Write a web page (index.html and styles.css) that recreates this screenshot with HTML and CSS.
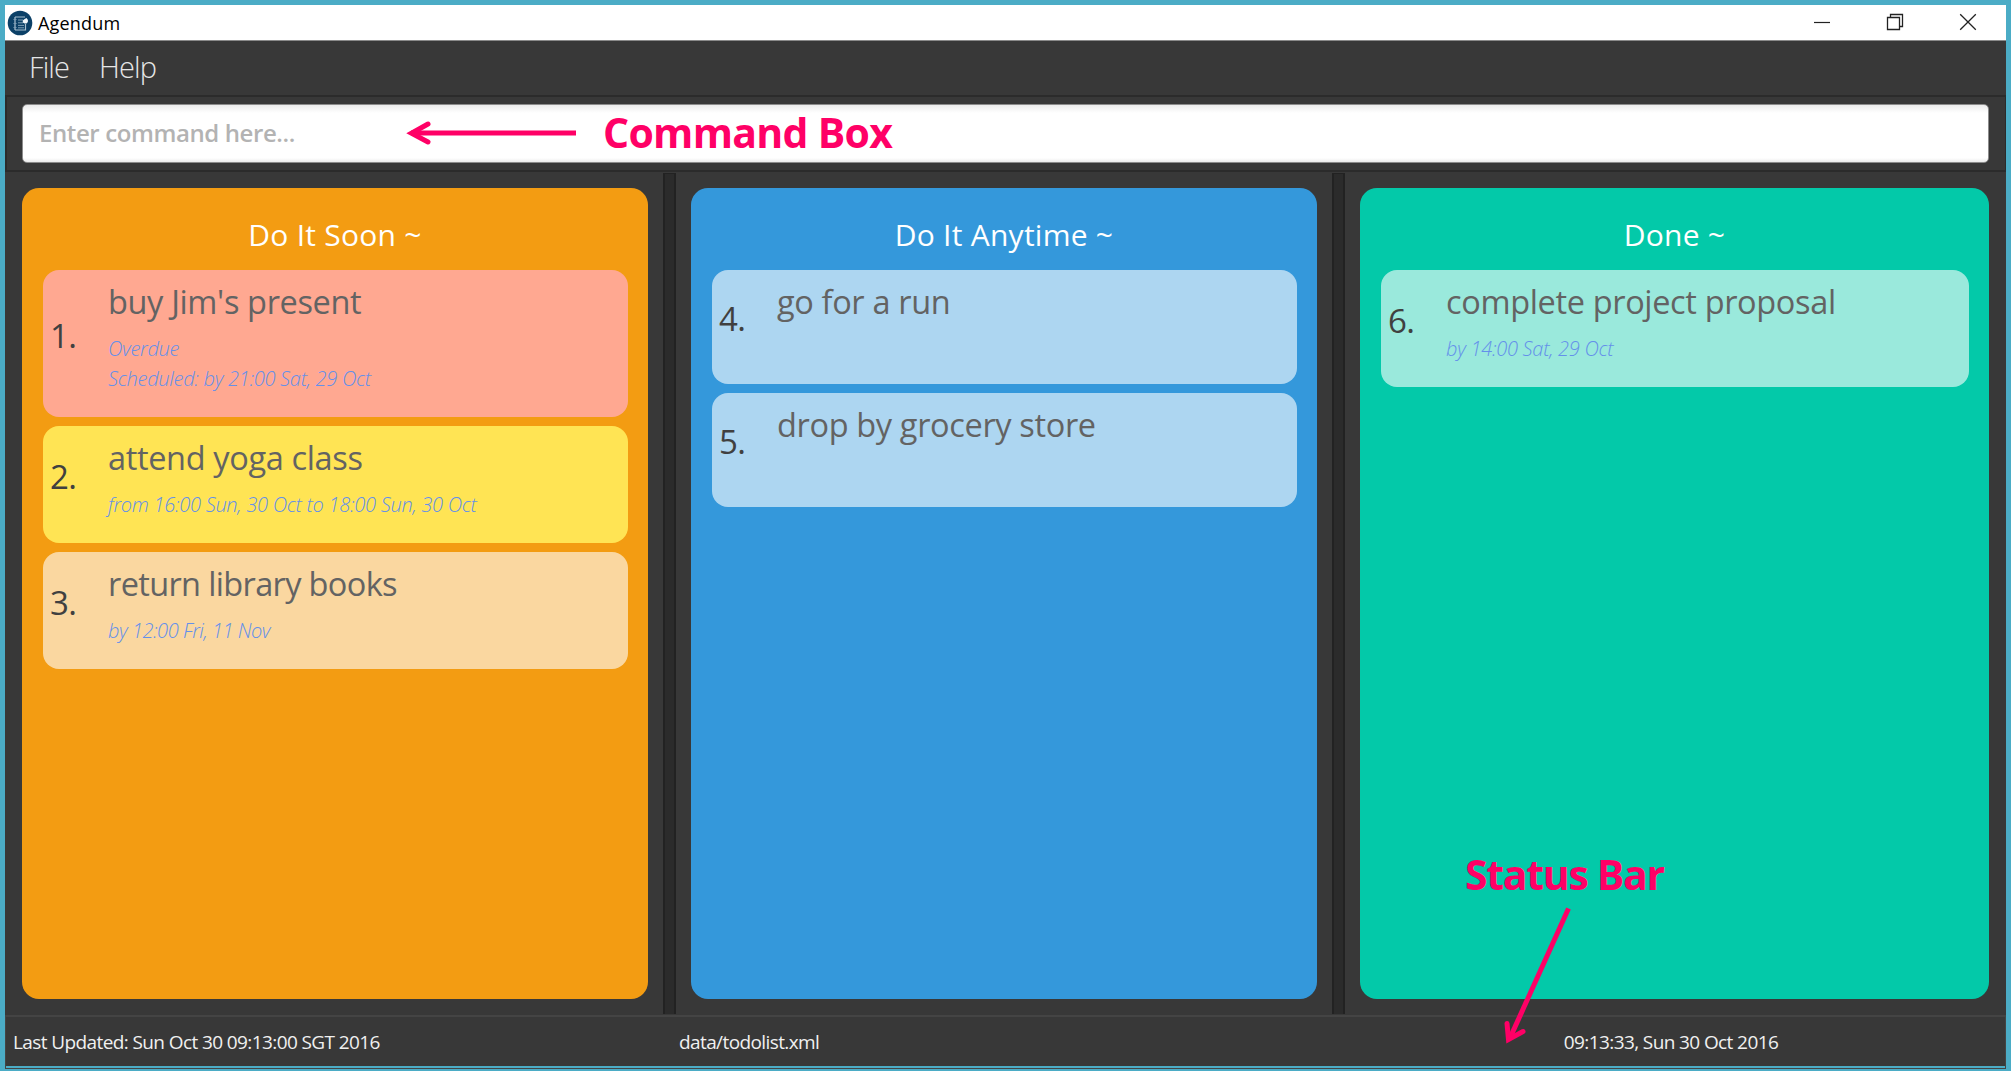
FILE: index.html
```
<!DOCTYPE html>
<html lang="en">
<head>
<meta charset="utf-8">
<title>Agendum</title>
<link rel="stylesheet" href="styles.css">
</head>
<body>
<div class="window">
  <header class="titlebar">
    <svg class="app-icon" viewBox="0 0 26 26" width="26" height="26">
      <circle cx="13" cy="13" r="12.3" fill="#0b4067"/>
      <path d="M8 7h10M18.500 14v6h-10.500M8 7v13" fill="none" stroke="#a9c0d0" stroke-width="1.200"/>
      <path d="M6.500 9.500h3M6.500 13.500h3M6.500 17.500h3M11 10h5M11 12.800h5M11 15.400h6M11 17.800h6" stroke="#7d9db5" stroke-width="1"/>
      <path d="M15.800 12.500a2.600 2.600 0 0 1 1.500-3.200l2.200-1.300 1.300 1.700a2.800 2.800 0 0 1-3.300 3.800z" fill="#f2f7fa"/>
    </svg>
    <span class="app-name">Agendum</span>
    <div class="window-buttons">
      <svg viewBox="0 0 18 18" width="18" height="18"><path d="M1 9.500h16" stroke="#222" stroke-width="1.200"/></svg>
      <svg viewBox="0 0 18 18" width="18" height="18"><path d="M1.500 4.500h12v12h-12zM4.500 4.500v-3h12v12h-3" fill="none" stroke="#222" stroke-width="1.300"/></svg>
      <svg viewBox="0 0 18 18" width="18" height="18"><path d="M1.200 1.200l15.600 15.600M16.800 1.200L1.200 16.800" stroke="#222" stroke-width="1.300"/></svg>
    </div>
  </header>

  <nav class="menu">
    <span>File</span>
    <span>Help</span>
  </nav>

  <div class="command-pane">
    <div class="command-box">Enter command here...</div>
  </div>

  <main class="board">
    <section class="column soon">
      <h2>Do It Soon ~</h2>
      <div class="tasks">
        <article class="task overdue">
          <span class="index">1.</span>
          <div class="details"><h3>buy Jim's present</h3><p>Overdue</p><p>Scheduled: by 21:00 Sat, 29 Oct</p></div>
        </article>
        <article class="task today">
          <span class="index">2.</span>
          <div class="details"><h3>attend yoga class</h3><p>from 16:00 Sun, 30 Oct to 18:00 Sun, 30 Oct</p></div>
        </article>
        <article class="task">
          <span class="index">3.</span>
          <div class="details"><h3 class="tight">return library books</h3><p class="tight">by 12:00 Fri, 11 Nov</p></div>
        </article>
      </div>
    </section>
    <div class="divider"></div>
    <section class="column anytime">
      <h2>Do It Anytime ~</h2>
      <div class="tasks">
        <article class="task">
          <span class="index">4.</span>
          <div class="details"><h3>go for a run</h3></div>
        </article>
        <article class="task">
          <span class="index">5.</span>
          <div class="details"><h3>drop by grocery store</h3></div>
        </article>
      </div>
    </section>
    <div class="divider"></div>
    <section class="column done">
      <h2>Done ~</h2>
      <div class="tasks">
        <article class="task">
          <span class="index">6.</span>
          <div class="details"><h3>complete project proposal</h3><p>by 14:00 Sat, 29 Oct</p></div>
        </article>
      </div>
    </section>
  </main>

  <footer class="status-bar">
    <span>Last Updated: Sun Oct 30 09:13:00 SGT 2016</span>
    <span>data/todolist.xml</span>
    <span class="clock">09:13:33, Sun 30 Oct 2016</span>
  </footer>
</div>

<svg class="arrow command-arrow" viewBox="0 0 180 30" width="180" height="30">
  <path d="M175 15H10" stroke-width="5"/>
  <path d="M27 6L10.500 15.200 27 24" stroke-width="5" stroke-linecap="round" stroke-linejoin="miter"/>
</svg>
<div class="callout command-callout">Command Box</div>
<div class="callout status-callout">Status Bar</div>
<svg class="arrow status-arrow" viewBox="0 0 80 150" width="80" height="150">
  <path d="M68.500 8.500L10 138" stroke-width="5"/>
  <path d="M7 123.500L8.500 139.500 23 131.500" stroke-width="5" stroke-linecap="round" stroke-linejoin="miter"/>
</svg>
</body>
</html>
```
FILE: styles.css
```
* { box-sizing: border-box; }

body {
  margin: 0;
  font-family: "Open Sans", "Noto Sans", sans-serif;
  position: relative;
}

h2, h3, p { margin: 0; font-weight: 400; }

.window {
  width: 2011px;
  height: 1071px;
  border: 5px solid #4bacc6;
  background: #383838;
  display: flex;
  flex-direction: column;
}

/* Title bar */
.titlebar {
  height: 36px;
  flex: none;
  background: #fff;
  border-bottom: 1px solid #8a8a8a;
  display: flex;
  align-items: center;
  padding: 0 29px 0 2px;
}

.app-name { font-size: 18px; margin-left: 5px; letter-spacing: 0.2px; color: #000; }

.window-buttons { margin: -1px 0 0 auto; display: flex; gap: 55px; }
.window-buttons svg { display: block; }

/* Menu */
.menu {
  height: 54px;
  flex: none;
  padding-left: 24px;
  display: flex;
  gap: 30px;
  font-size: 29px;
  font-weight: 300;
  line-height: 52px;
  letter-spacing: -0.9px;
  color: #e6e6e6;
}

/* Command input */
.command-pane {
  height: 77px;
  flex: none;
  border: 2px solid #2b2b2b;
  border-right-width: 1px;
  padding: 7px 16px 6px 15px;
}

.command-box {
  height: 59px;
  border: 1px solid #8c8c8c;
  border-radius: 5px;
  background: linear-gradient(#ececec, #fff 8px, #fff 53px, #ededed);
  padding-left: 16px;
  font-size: 24px;
  font-weight: 600;
  line-height: 56px;
  letter-spacing: -0.4px;
  color: #b3b3b3;
}

/* Task columns */
.board { height: 843px; flex: none; display: flex; padding: 1px 17px 0; }

.column {
  width: 626px;
  height: 811px;
  margin-top: 15px;
  border-radius: 17px;
  padding: 11px 20.500px 0;
}

.column.done { width: 629px; }

.divider {
  width: 13px;
  height: 841px;
  margin: 0 15px;
  background: #2b2b2b;
  border: solid #222;
  border-width: 1px 2px 0;
}

.soon { background: #f39c12; }
.anytime { background: #3498db; }
.done { background: #03c9a9; }

.column h2 {
  font-size: 30px;
  line-height: 71px;
  letter-spacing: 0.25px;
  text-align: center;
  color: #fff;
}

.tasks { display: flex; flex-direction: column; gap: 9px; }

.task {
  min-height: 114px;
  border-radius: 16px;
  background: rgba(255, 255, 255, 0.6);
  display: grid;
  grid-template-columns: 65.500px 1fr;
  padding-bottom: 23px;
}

.overdue { background: #ffa891; }
.today { background: #ffe454; }

.index {
  align-self: center;
  padding: 7px 0 0 7.500px;
  font-size: 33px;
  line-height: 40px;
  letter-spacing: -0.5px;
  color: #404040;
}

.details { padding-top: 9px; white-space: nowrap; }

.details h3 {
  font-size: 32.500px;
  line-height: 46px;
  margin-bottom: 9px;
  letter-spacing: -0.35px;
  color: #636363;
}

.details h3.tight { letter-spacing: -0.65px; }

.details p {
  font-size: 20px;
  font-style: italic;
  font-weight: 300;
  line-height: 30px;
  letter-spacing: -0.27px;
  color: #6490ea;
}

.details p.tight { letter-spacing: -0.45px; }

/* Status bar */
.status-bar {
  flex: 1;
  border: 1px solid #444;
  border-top-width: 2px;
  display: grid;
  grid-template-columns: 666px 666px 1fr;
  padding: 0 8px 0 7px;
  font-size: 19px;
  line-height: 51px;
  letter-spacing: -0.6px;
  color: #f0f0f0;
}

.clock { text-align: center; }

/* Callouts laid over the window */
.callout {
  position: absolute;
  font-size: 41px;
  font-weight: 700;
  line-height: 56px;
  letter-spacing: -0.7px;
  white-space: nowrap;
  color: #ff0066;
}

.command-callout { left: 603px; top: 104px; }
.status-callout { left: 1465px; top: 846px; letter-spacing: -1.3px; }

.arrow { position: absolute; fill: none; stroke: #ff0066; }
.command-arrow { left: 401px; top: 118px; }
.status-arrow { left: 1500px; top: 900px; }
```
